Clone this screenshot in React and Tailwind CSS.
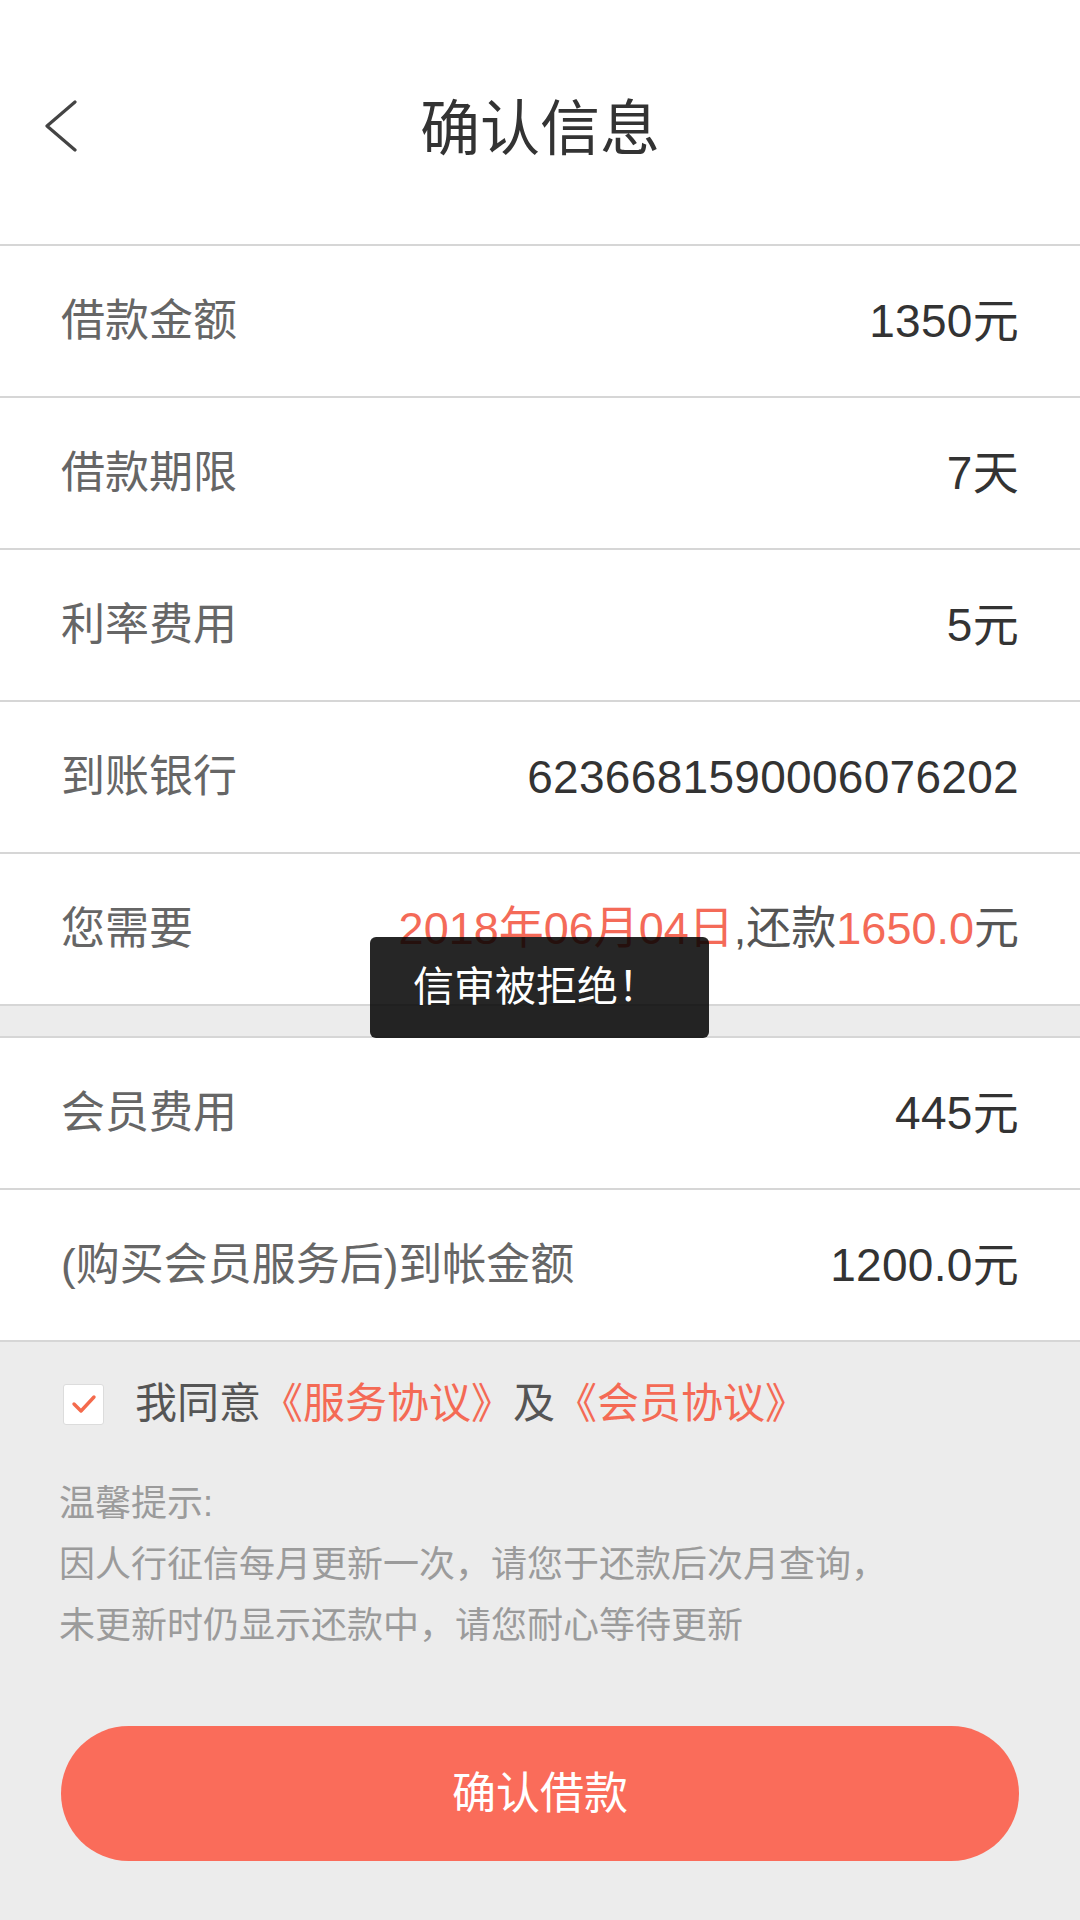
import React from "react";

const FONT = { fontFamily: "'Liberation Sans', 'Noto Sans CJK SC', sans-serif" };

function Row({ label, children, valueClass = "text-[46px] tracking-[0.3px]" }) {
  return (
    <div className="flex h-[152px] items-center justify-between border-b-2 border-[#d6d6d6] bg-white px-[61px]">
      <span className="text-[44px] text-[#666666]">{label}</span>
      <span className={`${valueClass} text-[#333333]`}>{children}</span>
    </div>
  );
}

export default function App() {
  return (
    <div className="relative flex min-h-[1920px] w-[1080px] flex-col bg-[#ececec]" style={FONT}>
      {/* Header */}
      <div className="relative flex h-[246px] items-center justify-center border-b-2 border-[#d6d6d6] bg-white pt-[16px]">
        <svg className="absolute left-[42px] top-[100px]" width="38" height="52" viewBox="0 0 38 52" fill="none">
          <path d="M33 2 L5 26 L33 50" stroke="#444" strokeWidth="3.2" strokeLinecap="round" strokeLinejoin="round" />
        </svg>
        <h1 className="text-[60px] leading-none text-[#333333]">确认信息</h1>
      </div>

      {/* Loan info */}
      <Row label="借款金额">1350元</Row>
      <Row label="借款期限">7天</Row>
      <Row label="利率费用">5元</Row>
      <Row label="到账银行">6236681590006076202</Row>
      <Row label="您需要" valueClass="text-[45px]">
        <span className="text-[#f46a58]">2018年06月04日</span>
        <span className="text-[#555555]">,还款</span>
        <span className="text-[#f46a58]">1650.0</span>
        <span className="text-[#555555]">元</span>
      </Row>

      <div className="h-[32px] border-b-2 border-[#d6d6d6] bg-[#ececec]" />

      <Row label="会员费用">445元</Row>
      <Row label="(购买会员服务后)到帐金额">1200.0元</Row>

      {/* Agreement */}
      <div className="flex items-center px-[63px] pt-[41px]">
        <div className="flex h-[41px] w-[41px] items-center justify-center rounded-[3px] border border-[#dcdcdc] bg-white">
          <svg width="26" height="22" viewBox="0 0 26 22" fill="none">
            <path d="M3 11 L10 18 L23 4" stroke="#f46a4c" strokeWidth="3.4" strokeLinecap="round" strokeLinejoin="round" />
          </svg>
        </div>
        <p className="ml-[31px] text-[42px] leading-none text-[#555555]">
          我同意<span className="text-[#f46a55]">《服务协议》</span>及<span className="text-[#f46a55]">《会员协议》</span>
        </p>
      </div>

      {/* Tips */}
      <div className="mt-[48px] px-[59px] text-[36px] leading-[61px] text-[#9b9b9b]">
        <p>温馨提示:</p>
        <p>因人行征信每月更新一次，请您于还款后次月查询，</p>
        <p>未更新时仍显示还款中，请您耐心等待更新</p>
      </div>

      <div className="px-[61px] pt-[70px]">
        <button className="flex h-[135px] w-full items-center justify-center rounded-full bg-[#fa6c5a] text-[44px] text-white">
          确认借款
        </button>
      </div>

      {/* Toast */}
      <div className="absolute left-[370px] top-[937px] flex h-[101px] w-[339px] items-center rounded-[6px] bg-black/85 pl-[43px] text-[41px] text-white">
        信审被拒绝！
      </div>
    </div>
  );
}
